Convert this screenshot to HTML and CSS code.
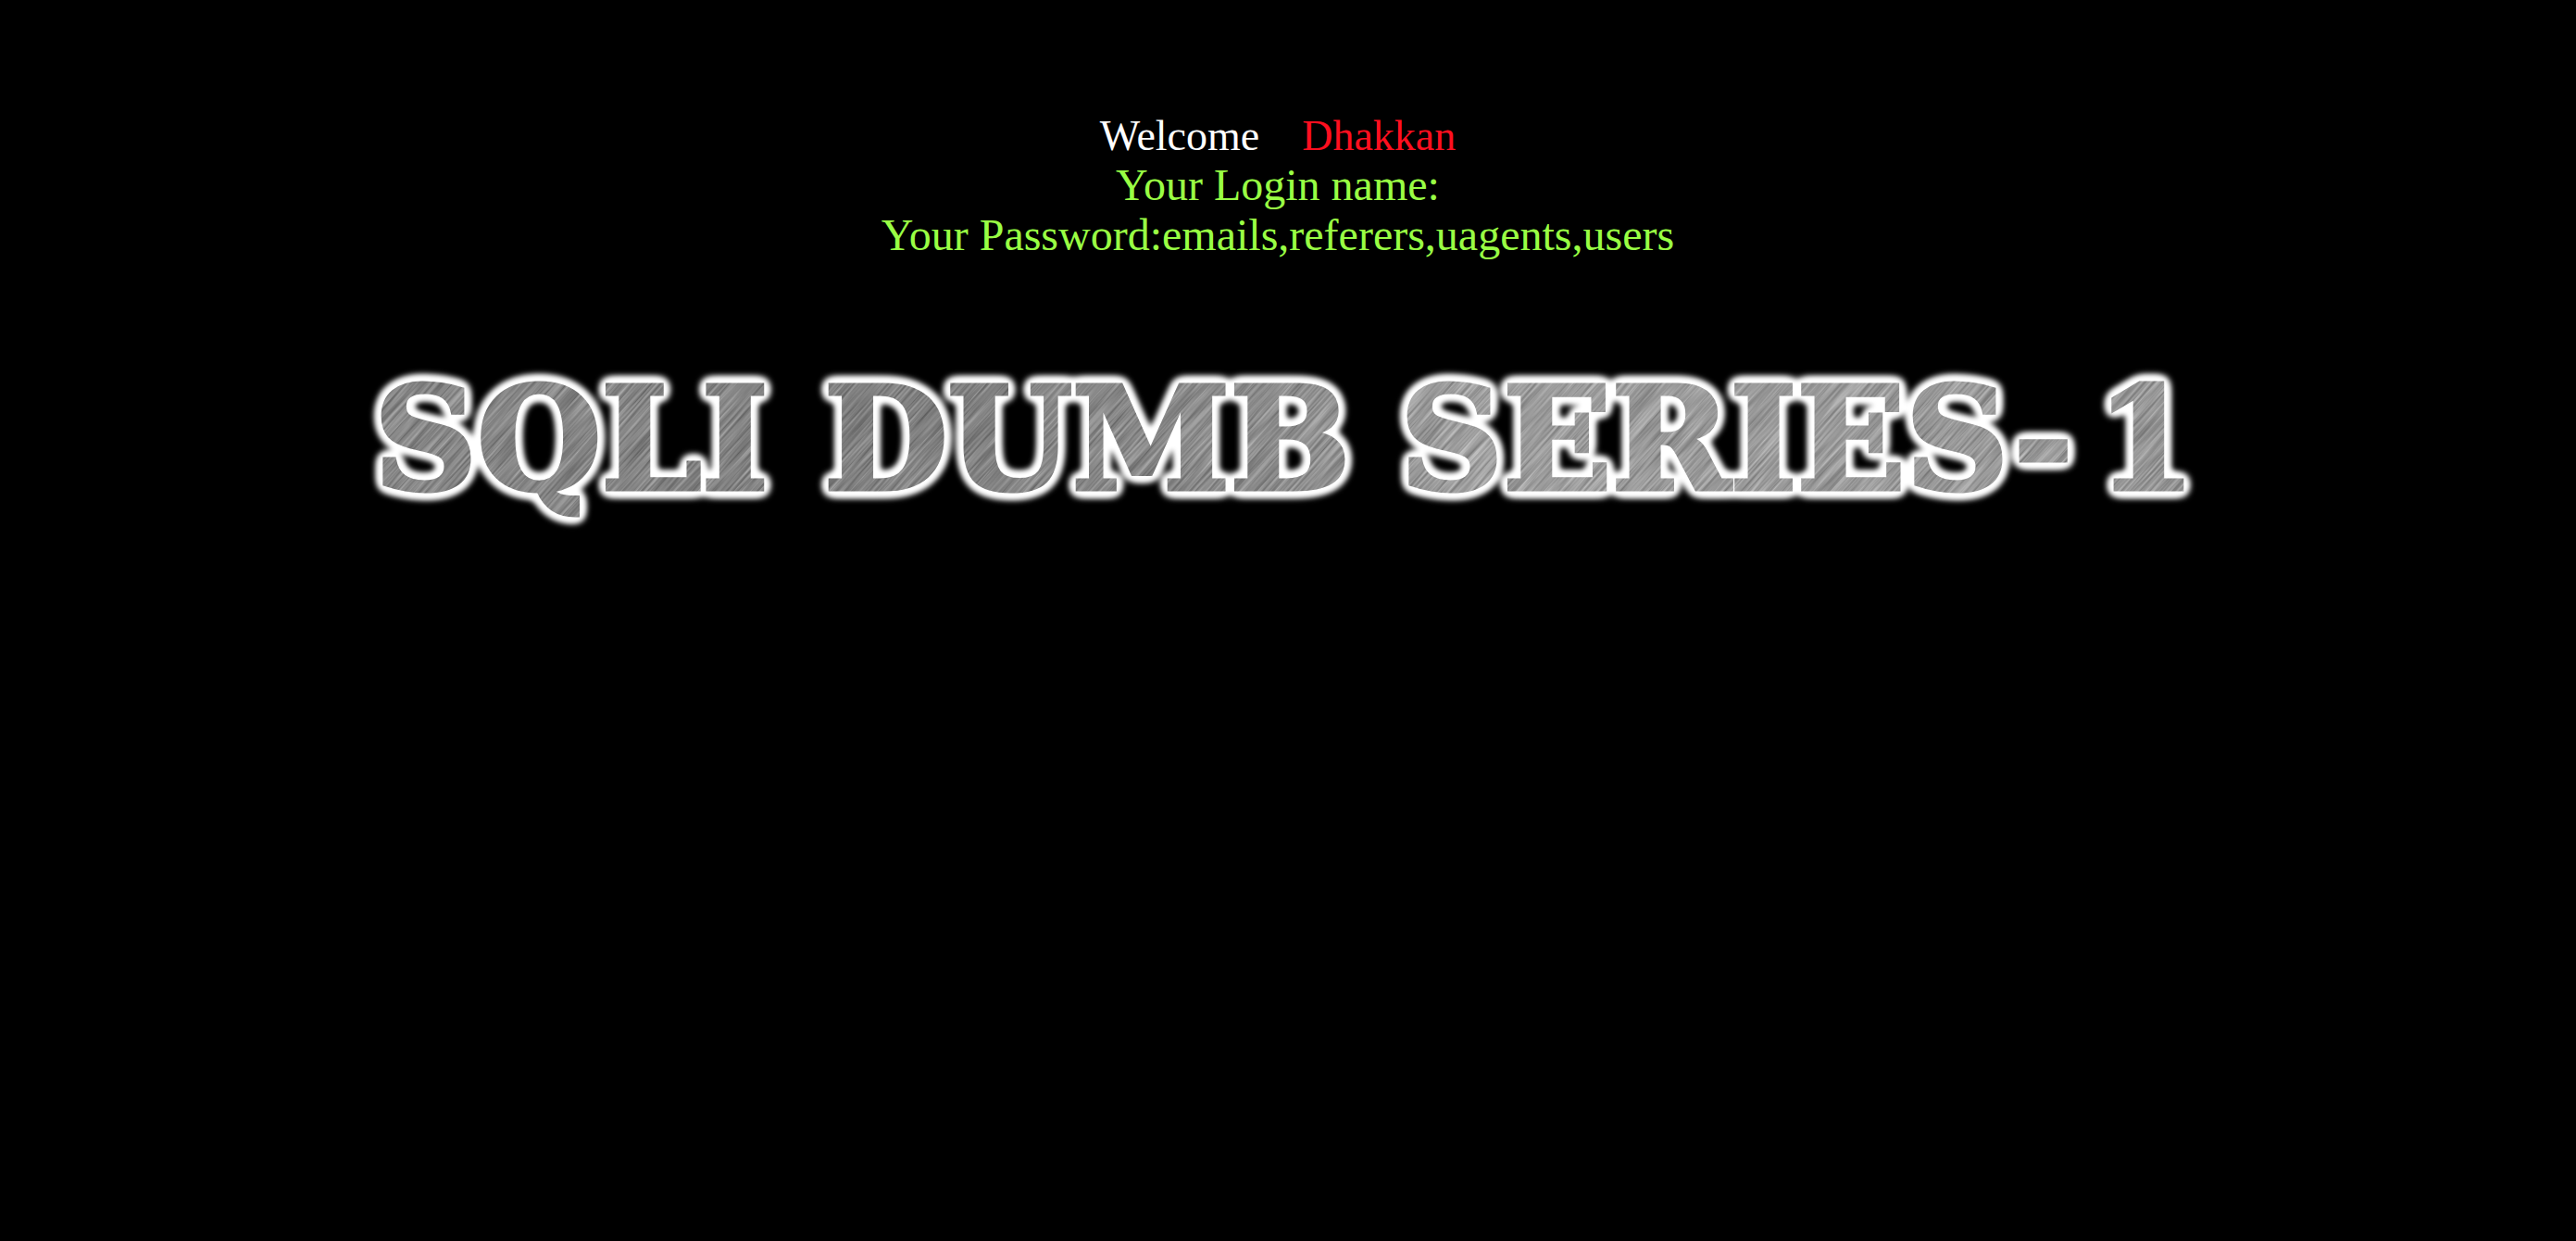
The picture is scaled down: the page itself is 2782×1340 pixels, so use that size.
FILE: index.html
```html
<!DOCTYPE html>
<html lang="en">
<head>
<meta charset="utf-8">
<title>SQLI DUMB SERIES-1</title>
<link rel="stylesheet" href="styles.css">
</head>
<body>
<main class="page">
  <p class="welcome"><span>Welcome</span><span class="name">Dhakkan</span></p>
  <p class="result">Your Login name:<br>Your Password:emails,referers,uagents,users</p>
  <h1 class="banner">
    <svg class="logo" viewBox="0 0 2000 200" role="img" aria-label="SQLI DUMB SERIES-1">
      <defs>
        <linearGradient id="tone" gradientUnits="userSpaceOnUse" x1="0" y1="0" x2="2000" y2="0">
          <stop offset="0" stop-color="#8c8c8c"/>
          <stop offset=".3" stop-color="#808080"/>
          <stop offset=".5" stop-color="#929292"/>
          <stop offset=".6" stop-color="#aaa"/>
          <stop offset="1" stop-color="#a0a0a0"/>
        </linearGradient>
        <filter id="grain" x="0" y="0" width="100%" height="100%" color-interpolation-filters="sRGB">
          <feTurbulence type="fractalNoise" baseFrequency="0.012 0.4" numOctaves="3" seed="4"/>
          <feColorMatrix values="1.4 0 0 0 -.2  1.4 0 0 0 -.2  1.4 0 0 0 -.2  0 0 0 0 .3"/>
        </filter>
        <pattern id="metal" patternUnits="userSpaceOnUse" width="2000" height="200">
          <rect width="2000" height="200" fill="url(#tone)"/>
          <g transform="rotate(-48 1000 100)">
            <rect x="100" y="-900" width="1800" height="2000" filter="url(#grain)"/>
          </g>
        </pattern>
        <filter id="halo" filterUnits="userSpaceOnUse" x="0" y="0" width="2000" height="200" color-interpolation-filters="sRGB">
          <feGaussianBlur in="SourceAlpha" stdDeviation="6"/>
          <feComponentTransfer result="spread"><feFuncA type="linear" slope="8" intercept="-.1"/></feComponentTransfer>
          <feFlood flood-color="#fff"/>
          <feComposite in2="spread" operator="in"/>
          <feGaussianBlur stdDeviation="2" result="glow"/>
          <feMerge><feMergeNode in="glow"/><feMergeNode in="SourceGraphic"/></feMerge>
        </filter>
      </defs>
      <text class="lettering" y="148" fill="url(#metal)" stroke="url(#metal)" stroke-width="5" filter="url(#halo)"><tspan x="24">SQLI</tspan> <tspan x="510">DUMB</tspan> <tspan x="1132">SERIES-</tspan><tspan x="1884">1</tspan></text>
    </svg>
  </h1>
</main>
</body>
</html>
```
FILE: styles.css
```css
body {
  margin: 0;
  background: #000;
  font-family: "Liberation Serif", "Times New Roman", serif;
}

.page {
  padding: 121px 22px 0 0;
  text-align: center;
}

.welcome {
  display: flex;
  justify-content: center;
  gap: 46px;
  margin: 0;
  color: #fff;
  font-size: 46px;
  line-height: 52px;
}

.name {
  color: #ff0f1f;
}

.result {
  margin: 0;
  color: #99ff44;
  font-size: 48px;
  line-height: 54px;
}

.banner {
  margin: 99px 0 0;
}

.logo {
  display: block;
  width: 2000px;
  max-width: 100%;
  margin: 0 auto;
}

.lettering {
  font-family: "DejaVu Serif", serif;
  font-size: 154px;
  font-weight: 700;
}
```
